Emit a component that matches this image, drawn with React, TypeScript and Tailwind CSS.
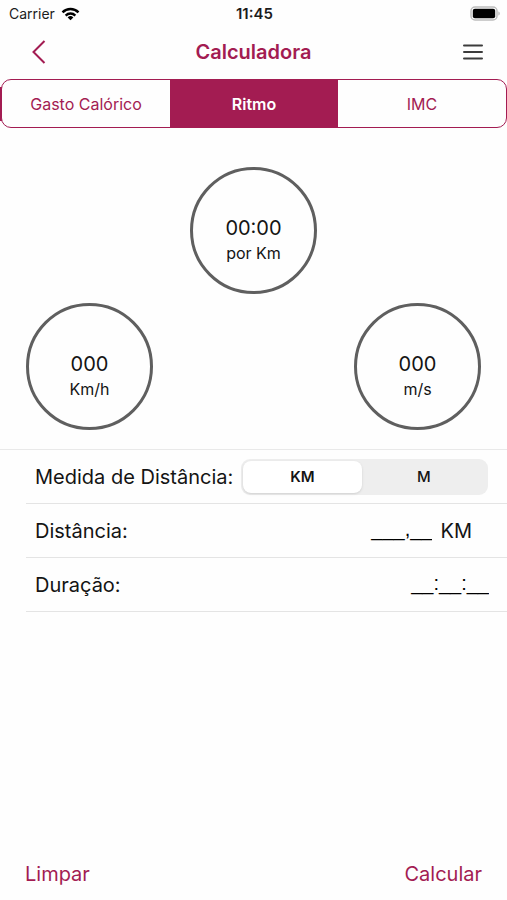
import { useState } from "react";

const TABS = ["Gasto Calórico", "Ritmo", "IMC"];
const UNITS = ["KM", "M"];

function StatusBar() {
  return (
    <div className="grid h-7 grid-cols-3 items-center pl-[9px] pr-[7px] text-sm text-[#1c1c1c]">
      <div className="flex items-center gap-1.5">
        <span>Carrier</span>
        <svg width="19" height="14" viewBox="0 0 20 14" aria-hidden="true">
          <g fill="none" stroke="#000" strokeWidth="2.6">
            <path d="M1.6 5.2a12 12 0 0 1 16.8 0" />
            <path d="M4.9 8.6a7.4 7.4 0 0 1 10.2 0" />
          </g>
          <path d="M10 13.6 7 10.6a4.3 4.3 0 0 1 6 0z" fill="#000" />
        </svg>
      </div>
      <span className="text-center text-[15px] font-semibold">11:45</span>
      <svg className="justify-self-end" width="30" height="16" viewBox="0 0 30 16" aria-hidden="true">
        <rect x="1" y="1" width="26" height="13" rx="4" fill="#fff" stroke="#bdbdbd" strokeWidth="1.5" />
        <rect x="2.8" y="2.8" width="22.4" height="9.4" rx="2" fill="#000" />
        <path d="M28.3 5.5c2 .6 2 3.4 0 4z" fill="#bdbdbd" />
      </svg>
    </div>
  );
}

function Header() {
  return (
    <header className="flex h-[51px] items-center justify-between px-5 pb-1">
      <button type="button" aria-label="Voltar" className="flex w-7 justify-end">
        <svg width="16" height="24" viewBox="0 0 16 24" fill="none" stroke="#a31c52" strokeWidth="2" aria-hidden="true">
          <path d="M12.5 1 1.5 12l11 11" />
        </svg>
      </button>
      <h1 className="text-xl font-semibold text-[#a31c52]">Calculadora</h1>
      <button type="button" aria-label="Menu" className="flex w-7 justify-center">
        <svg width="20" height="16" viewBox="0 0 20 16" stroke="#3c3c3c" strokeWidth="2" strokeLinecap="round" aria-hidden="true">
          <path d="M1 1.5h18M1 8h18M1 14.5h18" />
        </svg>
      </button>
    </header>
  );
}

function Gauge({ value, unit }: { value: string; unit: string }) {
  return (
    <div className="flex size-[127px] flex-col items-center justify-center rounded-full border-[3px] border-[#5f5f5f] pt-4 text-[#141414]">
      <span className="text-xl leading-7">{value}</span>
      <span className="text-base leading-[22px]">{unit}</span>
    </div>
  );
}

export default function App() {
  const [tab, setTab] = useState("Ritmo");
  const [unit, setUnit] = useState("KM");

  return (
    <div className="flex min-h-screen flex-col bg-[#fefefe] font-['Inter','Liberation_Sans',sans-serif] text-[#141414]">
      <StatusBar />
      <Header />

      <nav className="bg-[linear-gradient(to_right,#a31c52_50%,transparent_50%)] bg-[length:100%_34px] bg-center bg-no-repeat pl-px">
        <div className="flex h-[49px] overflow-hidden rounded-[10px] border border-[#a31c52] bg-[#fefefe]">
          {TABS.map((name) => (
            <button
              key={name}
              type="button"
              aria-pressed={tab === name}
              onClick={() => setTab(name)}
              className={
                tab === name
                  ? "flex-1 bg-[#a31c52] text-base font-semibold text-white"
                  : "flex-1 text-base text-[#a31c52]"
              }
            >
              {name}
            </button>
          ))}
        </div>
      </nav>

      <section className="flex flex-col gap-[9px] px-[26px] pb-[19px] pt-[39px]">
        <div className="flex justify-center">
          <Gauge value="00:00" unit="por Km" />
        </div>
        <div className="flex justify-between">
          <Gauge value="000" unit="Km/h" />
          <Gauge value="000" unit="m/s" />
        </div>
      </section>

      <form id="ritmo" className="border-t border-[#e9e9e9] pl-[26px] text-xl">
        <div className="flex h-[54px] items-center gap-2 border-b border-[#e4e4e4] pl-[9px] pr-[19px]">
          <span id="medida" className="whitespace-nowrap">Medida de Distância:</span>
          <div
            role="group"
            aria-labelledby="medida"
            className="grid h-9 flex-1 grid-cols-[118fr_124fr] rounded-[9px] bg-[#eeeeee] p-0.5"
          >
            {UNITS.map((name) => (
              <button
                key={name}
                type="button"
                aria-pressed={unit === name}
                onClick={() => setUnit(name)}
                className={
                  unit === name
                    ? "rounded-lg bg-white text-[15px] font-semibold shadow"
                    : "text-[15px] font-medium"
                }
              >
                {name}
              </button>
            ))}
          </div>
        </div>
        <div className="flex h-[54px] items-center border-b border-[#e4e4e4] pl-[9px] pr-[35px]">
          <label htmlFor="distancia">Distância:</label>
          <input
            id="distancia"
            inputMode="decimal"
            placeholder="___,__"
            className="min-w-0 flex-1 bg-transparent pb-1 pr-2 text-right font-['Liberation_Sans',sans-serif] outline-none placeholder:text-black"
          />
          <span>{unit}</span>
        </div>
        <div className="flex h-[54px] items-center border-b border-[#e4e4e4] pl-[9px] pr-[18px]">
          <label htmlFor="duracao">Duração:</label>
          <input
            id="duracao"
            inputMode="numeric"
            placeholder="__:__:__"
            className="min-w-0 flex-1 bg-transparent pb-1 text-right font-['Liberation_Sans',sans-serif] outline-none placeholder:text-black"
          />
        </div>
      </form>

      <footer className="mt-auto flex h-[52px] items-center justify-between px-[25px] text-xl text-[#a31c52]">
        <button type="reset" form="ritmo">Limpar</button>
        <button type="button">Calcular</button>
      </footer>
    </div>
  );
}
